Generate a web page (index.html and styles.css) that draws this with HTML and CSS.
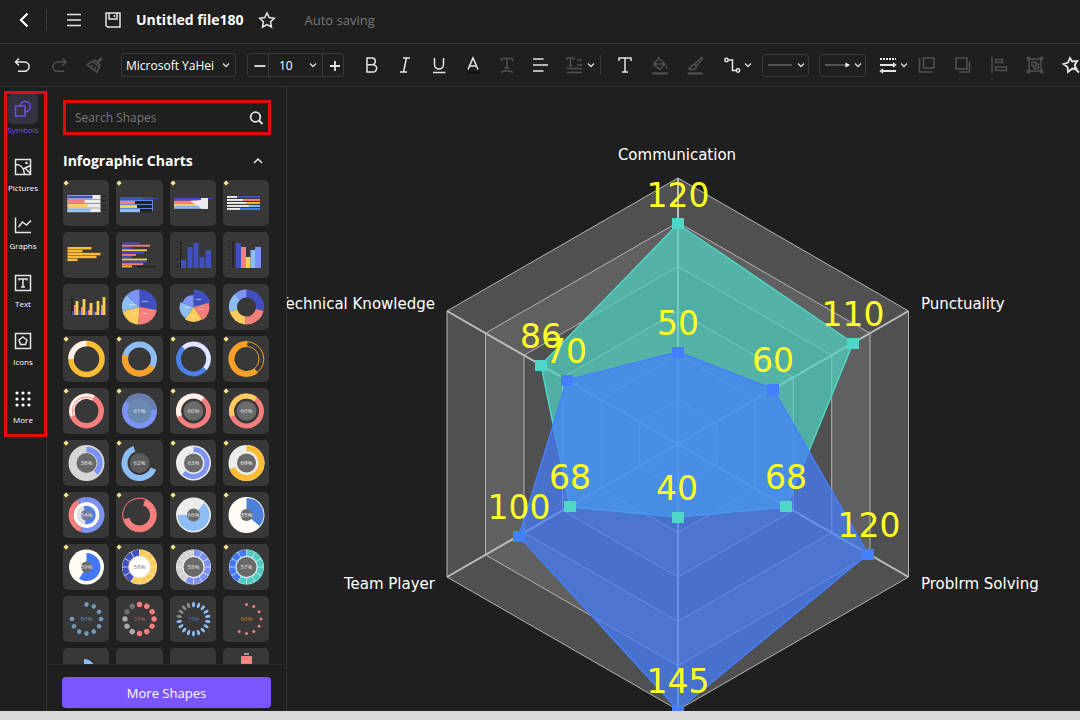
FILE: index.html
```html
<!DOCTYPE html>
<html lang="en">
<head>
<meta charset="utf-8">
<title>Untitled file180</title>
<link rel="stylesheet" href="styles.css">
</head>
<body>
<header class="topbar">
  <button class="icon-btn" aria-label="Back"><svg class="icon bold" viewBox="0 0 24 24"><path d="M15.500 5.500 9 12l6.500 6.500"/></svg></button>
  <span class="divider"></span>
  <button class="icon-btn menu" aria-label="Menu"><svg class="icon" viewBox="0 0 24 24"><path d="M5 6.500h14M5 12h14M5 17.500h14"/></svg></button>
  <button class="icon-btn save" aria-label="Save"><svg class="icon" viewBox="0 0 24 24"><path d="M5 5h14v14H6.500L5 17.500zM8 5v6h8V5M13.500 7v2"/></svg></button>
  <h1 class="title">Untitled file180</h1>
  <button class="icon-btn star" aria-label="Favorite"><svg class="icon" viewBox="0 0 24 24"><path d="m12 5 2.200 4.600 5 .700-3.600 3.500.900 5.200-4.500-2.500L7.500 19l.900-5.200-3.600-3.500 5-.700z"/></svg></button>
  <span class="status">Auto saving</span>
</header>

<div class="toolbar" role="toolbar" aria-label="Formatting">
  <div class="group history">
    <button class="icon-btn" aria-label="Undo"><svg class="icon" viewBox="0 0 24 24"><path d="M8 5.500 4.500 9 8 12.500M5 9h8.500a4.600 4.600 0 0 1 0 9.200H7"/></svg></button>
    <button class="icon-btn off" aria-label="Redo"><svg class="icon" viewBox="0 0 24 24"><path d="M15.500 5.500 19 9l-3.500 3.500M18.500 9H10.500a4.600 4.600 0 0 0 0 9.200H17"/></svg></button>
    <button class="icon-btn off" aria-label="Format painter"><svg class="icon" viewBox="0 0 24 24"><path d="m18.500 4.500-4 4M12 7l5 5-3 7.500L4 11.500zM10 8.500l6 5.500M8 14l2-2M11 16.500l2-2.500M16 9l3-3"/></svg></button>
  </div>
  <span class="select font">
    <select aria-label="Font family"><option>Microsoft YaHei</option></select>
    <svg class="chev" viewBox="0 0 8 8"><path d="m1 2.500 3 3 3-3"/></svg>
  </span>
  <div class="stepper">
    <button aria-label="Smaller"><svg class="icon plus" viewBox="0 0 24 24"><path d="M6.500 12h11"/></svg></button>
    <span class="select size">
      <select aria-label="Font size"><option>10</option></select>
      <svg class="chev" viewBox="0 0 8 8"><path d="m1 2.500 3 3 3-3"/></svg>
    </span>
    <button aria-label="Larger"><svg class="icon plus" viewBox="0 0 24 24"><path d="M7 12h10M12 7v10"/></svg></button>
  </div>
  <div class="group text">
    <button class="icon-btn" aria-label="Bold"><svg class="icon" viewBox="0 0 24 24"><path d="M8 5h5a3.300 3.300 0 0 1 0 6.700H8zM8 11.700h6a3.600 3.600 0 0 1 0 7.300H8z"/></svg></button>
    <button class="icon-btn" aria-label="Italic"><svg class="icon" viewBox="0 0 24 24"><path d="M10 5h7M7 19h7M13.500 5l-3 14"/></svg></button>
    <button class="icon-btn" aria-label="Underline"><svg class="icon" viewBox="0 0 24 24"><path d="M7.500 5v6.500a4.500 4.500 0 0 0 9 0V5M6 19.500h12.500"/></svg></button>
    <button class="icon-btn" aria-label="Font color"><svg class="icon" viewBox="0 0 24 24"><path d="M7 16.500 12 5l5 11.500M8.500 13h7"/><path class="ink" d="M5.500 19.500h13"/></svg></button>
    <button class="icon-btn off" aria-label="Text on path"><svg class="icon" viewBox="0 0 24 24"><path d="M6.500 8V5.500h11V8M12 5.500V15M9.500 15h5M6 19.500c3-2.500 9-2.500 12 0"/></svg></button>
    <button class="icon-btn" aria-label="Align"><svg class="icon" viewBox="0 0 24 24"><path d="M4 6h10.500M4 12h15M4 18h10.500"/></svg></button>
    <button class="icon-btn wide" aria-label="Line spacing"><svg class="icon off" viewBox="0 0 24 24"><path d="M4 7V5h7v2M7.500 5v8M6 13h3M14 7h5M14 12h5M3.500 15.500H19M3.500 19.500H19"/></svg><svg class="chev" viewBox="0 0 8 8"><path d="m1 2.500 3 3 3-3"/></svg></button>
  </div>
  <span class="divider"></span>
  <div class="group style">
    <button class="icon-btn" aria-label="Text tool"><svg class="icon" viewBox="0 0 24 24"><path d="M6 8V5h12v3M12 5v14M9 19h6"/></svg></button>
    <button class="icon-btn off" aria-label="Fill"><svg class="icon" viewBox="0 0 24 24"><path d="m9.500 4 7.500 7-5.500 5.500L5.500 11l5-5M6.500 11h10M18.500 12.500v3"/><path class="thick" d="M4.500 20.500h15"/></svg></button>
    <button class="icon-btn off" aria-label="Line color"><svg class="icon" viewBox="0 0 24 24"><path d="m18.500 4.500-7 6.500 2 2 6-7zM11.500 11.500c-3-.500-3 2.500-5.500 4.500 3.500 1 7.500.500 7.500-3"/><path class="thick" d="M4.500 20.500h15"/></svg></button>
  </div>
  <div class="group lines">
    <button class="icon-btn wide" aria-label="Connector"><svg class="icon" viewBox="0 0 24 24"><circle cx="6.500" cy="7" r="1.700"/><circle cx="18" cy="17.500" r="1.700"/><path d="M8.200 7H12.500v10.500h3.800"/></svg><svg class="chev" viewBox="0 0 8 8"><path d="m1 2.500 3 3 3-3"/></svg></button>
    <button class="line-btn" aria-label="Line type"><svg class="line" viewBox="0 0 26 8"><path d="M1 4h24"/></svg><svg class="chev" viewBox="0 0 8 8"><path d="m1 2.500 3 3 3-3"/></svg></button>
    <button class="line-btn" aria-label="Arrow type"><svg class="line" viewBox="0 0 26 8"><path d="M1 4h22"/><path class="tip" d="m21.500 1.500 4.500 2.500-4.500 2.500z"/></svg><svg class="chev" viewBox="0 0 8 8"><path d="m1 2.500 3 3 3-3"/></svg></button>
    <button class="icon-btn wide" aria-label="Line style"><svg class="icon" viewBox="0 0 24 24"><path class="thick" stroke-dasharray="2 1" d="M4 6h16"/><path class="thick" d="M4 12h14M6 18h14"/><path d="m17 10 2.500 2-2.500 2M7 16l-2.500 2L7 20"/></svg><svg class="chev" viewBox="0 0 8 8"><path d="m1 2.500 3 3 3-3"/></svg></button>
  </div>
  <div class="group arrange">
    <button class="icon-btn off" aria-label="Bring to front"><svg class="icon" viewBox="0 0 24 24"><path d="M8.500 5h10.500v10H8.500zM4.500 5v14h13"/></svg></button>
    <button class="icon-btn off" aria-label="Send to back"><svg class="icon" viewBox="0 0 24 24"><path d="M5 5h11v11H5zM18.500 8.500v10.500H8"/></svg></button>
    <button class="icon-btn off" aria-label="Align objects"><svg class="icon" viewBox="0 0 24 24"><path d="M5 4v16M8.500 6.500h7v3h-7zM8.500 14h11v3.500h-11z"/></svg></button>
    <button class="icon-btn off" aria-label="Group"><svg class="icon" viewBox="0 0 24 24"><path d="M6 6h12v12H6zM9 9h4v4H9zM13 11h2.500v4.500H11V13"/><path d="M4.500 4.500h2v2h-2zM17.500 4.500h2v2h-2zM4.500 17.500h2v2h-2zM17.500 17.500h2v2h-2z"/></svg></button>
    <button class="icon-btn" aria-label="Effects"><svg class="icon strong" viewBox="0 0 24 24"><path d="m11 5 2.200 3.500 5-.500-2.500 4 2 4.500-4.500-1L9 19l-.500-5L4.500 11l4.500-1.500zM15 14.500l5 5"/></svg></button>
  </div>
</div>

<main class="workspace">
  <div class="rail">
    <nav class="rail-nav" aria-label="Libraries">
      <a class="rail-item active" href="#symbols"><span class="rail-icon"><svg class="icon" viewBox="0 0 24 24"><path d="M4.500 9h9.500v10H4.500z"/><path d="M9 9a5.200 5.200 0 1 1 5 5.800"/></svg></span>Symbols</a>
      <a class="rail-item" href="#pictures"><span class="rail-icon"><svg class="icon" viewBox="0 0 24 24"><path d="M4.500 4.500h15v15h-15zM5 9.500c5 0 8 4 8.500 9.500M12 14l7.500-3.500M14 13l5 5"/><circle cx="15.500" cy="8" r=".6"/></svg></span>Pictures</a>
      <a class="rail-item" href="#graphs"><span class="rail-icon"><svg class="icon" viewBox="0 0 24 24"><path d="M4.500 4.500v15H20M7.500 14l4-5 4 3L20 7.500"/></svg></span>Graphs</a>
      <a class="rail-item" href="#text"><span class="rail-icon"><svg class="icon" viewBox="0 0 24 24"><path d="M4.500 4.500h15v15h-15zM8 9.500V8h8v1.500M12 8v8M10 16h4"/></svg></span>Text</a>
      <a class="rail-item" href="#icons"><span class="rail-icon"><svg class="icon" viewBox="0 0 24 24"><path d="M4.500 4.500h15v15h-15zM12 8l4 3-1.500 4.500h-5L8 11z"/></svg></span>Icons</a>
      <a class="rail-item" href="#more"><span class="rail-icon"><svg class="icon dots" viewBox="0 0 24 24"><circle cx="6" cy="6" r="1.600"/><circle cx="12" cy="6" r="1.600"/><circle cx="18" cy="6" r="1.600"/><circle cx="6" cy="12" r="1.600"/><circle cx="12" cy="12" r="1.600"/><circle cx="18" cy="12" r="1.600"/><circle cx="6" cy="18" r="1.600"/><circle cx="12" cy="18" r="1.600"/><circle cx="18" cy="18" r="1.600"/></svg></span>More</a>
    </nav>
  </div>

  <aside class="panel">
    <div class="library">
      <label class="search">
        <input type="text" placeholder="Search Shapes" aria-label="Search Shapes">
        <svg class="icon strong" viewBox="0 0 24 24"><circle cx="11.500" cy="11" r="4.800"/><path d="m15 14.500 3.500 3.500"/></svg>
      </label>
      <div class="section-head">
        <h2>Infographic Charts</h2>
        <button class="icon-btn" aria-label="Collapse"><svg class="icon" viewBox="0 0 24 24"><path d="m8 14 4-4 4 4"/></svg></button>
      </div>
      <div class="tiles" id="tiles"></div>
    </div>
    <div class="panel-foot"><button class="more">More Shapes</button></div>
  </aside>

  <section class="canvas">
    <svg class="radar" viewBox="287 87 793 624" role="img" aria-label="Skills radar chart">
      <g class="rings">
        <path class="dark" d="M678 178 908.500 311V577L678 710 447 577V311z"/>
        <path class="light" d="M678 222.300 870 333.200V554.800L678 665.700 485.500 554.800V333.200z"/>
        <path class="dark" d="M678 266.700 831.700 355.300V532.700L678 621.300 524 532.700V355.300z"/>
        <path class="light" d="M678 311 793.300 377.500V510.500L678 577 562.500 510.500V377.500z"/>
        <path class="dark" d="M678 355.300 754.800 399.700V488.300L678 532.700 601 488.300V399.700z"/>
        <path class="light" d="M678 399.700 716.400 421.800V466.200L678 488.300 639.500 466.200V421.800z"/>
      </g>
      <path class="axes" d="M678 178V710M447 311 908.500 577M908.500 311 447 577"/>
      <path class="area teal" d="M678 224 853 343 786 507 678 517 570 507 541 365z"/>
      <path class="area blue" d="M678 352 773 389 868 554 678 710 519 536 567 380z"/>
      <path class="mark teal" d="M672 218h12v11h-12zM847 338h12v11h-12zM780 501h12v11h-12zM672 512h12v11h-12zM564 501h12v11h-12zM535 360h12v11h-12z"/>
      <path class="mark blue" d="M672 347h12v11h-12zM767 384h12v11h-12zM862 549h12v11h-12zM672 705h12v11h-12zM513 531h12v11h-12zM561 375h12v11h-12z"/>
      <g class="values">
        <text x="678" y="207">120</text><text x="853" y="326">110</text>
        <text x="786" y="489">68</text><text x="677" y="500">40</text>
        <text x="570" y="489">68</text><text x="541" y="348">86</text>
        <text x="678" y="335">50</text><text x="773" y="372">60</text>
        <text x="869" y="537">120</text><text x="678" y="693">145</text>
        <text x="519" y="519">100</text><text x="566" y="363">70</text>
      </g>
      <g class="labels">
        <text class="mid" x="677" y="160">Communication</text>
        <text x="921" y="309">Punctuality</text>
        <text x="921" y="589">Problrm Solving</text>
        <text class="end" x="435" y="589">Team Player</text>
        <text class="end" x="435" y="309">Technical Knowledge</text>
      </g>
    </svg>
  </section>
</main>
<footer class="statusbar"></footer>
<script src="app.js"></script>
</body>
</html>
```
FILE: styles.css
```css
* { box-sizing: border-box; }

body {
  margin: 0;
  height: 100vh;
  display: flex;
  flex-direction: column;
  overflow: hidden;
  background: #1f1f1f;
  color: #fff;
  font-family: "Open Sans", "Noto Sans", sans-serif;
  font-size: 13px;
}

button, select, input {
  margin: 0;
  padding: 0;
  border: 0;
  background: none;
  color: inherit;
  font: inherit;
}

h1, h2 { margin: 0; font-weight: 700; white-space: nowrap; }

.icon {
  width: 24px;
  height: 24px;
  flex: none;
  display: block;
  fill: none;
  stroke: #e6e6e6;
  stroke-width: 1.5;
}
.icon.bold { stroke: #fff; stroke-width: 2.2; }
.icon.strong, .icon.plus { stroke-width: 1.8; }
.icon .thick { stroke-width: 2.2; }
.icon .ink { stroke: #111; stroke-width: 2; }
.off .icon, .icon.off { stroke: #505050; }
.icon.dots { fill: #fff; stroke: none; }

.icon-btn { display: flex; align-items: center; flex: none; width: 24px; height: 24px; }
.icon-btn.wide { width: 32px; }
.chev { width: 8px; height: 8px; flex: none; fill: none; stroke: #ddd; stroke-width: 1.3; }
.divider { width: 1px; height: 22px; flex: none; background: #3a3a3a; }

.topbar {
  display: flex;
  align-items: center;
  flex: none;
  height: 44px;
  padding: 0 12px 4px;
  border-bottom: 1px solid #333;
}
.topbar .divider { margin: 0 15px 0 10px; }
.save { margin-left: 15px; }
.title { margin: 0 11px; font-size: 14px; line-height: 20px; }
.status { margin-left: 26px; color: #777; }

.toolbar {
  display: flex;
  align-items: center;
  flex: none;
  height: 43px;
  padding-left: 11px;
  overflow: hidden;
  border-bottom: 1px solid #333;
}
.group { display: flex; align-items: center; flex: none; gap: 11px; }
.history { gap: 12px; margin-right: 14px; }
.text { gap: 10px; margin: 0 5px 0 15px; }
.style { margin: 0 13px 0 12px; }
.lines { gap: 10px; margin-right: 7px; }
.arrange { gap: 12px; }
.toolbar .divider { height: 20px; }

.select { position: relative; display: flex; align-items: center; flex: none; }
.select select { appearance: none; width: 100%; height: 22px; outline: 0; font-size: 12px; }
.select .chev { position: absolute; right: 5px; pointer-events: none; }
.font { width: 115px; margin-right: 11px; border: 1px solid #3a3a3a; border-radius: 3px; }
.font select { padding-left: 4px; }
.stepper { display: flex; flex: none; width: 97px; border: 1px solid #3a3a3a; border-radius: 3px; }
.stepper button { width: 20px; height: 22px; display: grid; place-items: center; }
.size { flex: 1; border: solid #3a3a3a; border-width: 0 1px; }
.size select { padding-left: 10px; }

.line-btn {
  display: flex;
  align-items: center;
  gap: 4px;
  flex: none;
  width: 47px;
  height: 23px;
  padding-left: 4px;
  border: 1px solid #3a3a3a;
  border-radius: 4px;
}
.line { width: 26px; height: 8px; fill: none; stroke: #888; }
.line .tip { fill: #fff; stroke: none; }

.workspace { display: flex; flex: 1; min-height: 0; }

.rail { flex: none; width: 47px; border-right: 1px solid #303030; padding: 4px 0 0 4px; }
.rail-nav {
  position: relative;
  display: flex;
  flex-direction: column;
  gap: 16px;
  width: 43px;
  padding: 0 5px 8px 0;
  border: 3px solid #e30b0b;
}
.rail-item {
  display: flex;
  flex-direction: column;
  align-items: center;
  color: #fff;
  font-size: 8px;
  line-height: 12px;
  text-decoration: none;
}
.rail-icon { display: grid; place-items: center; width: 30px; height: 30px; border-radius: 5px; }
.active { color: #7050e8; }
.active .rail-icon { background: #35323f; }
.active .icon { stroke: #7050e8; }

.panel { display: flex; flex-direction: column; flex: none; width: 240px; border-right: 1px solid #303030; }
.library { flex: 1; min-height: 0; overflow: hidden; padding: 13px 15px 0 16px; }
.search { display: flex; align-items: center; height: 35px; border: 3px solid #e30b0b; padding: 0 0 0 9px; }
.search input { flex: 1; min-width: 0; outline: 0; font-size: 12px; }
.search input::placeholder { color: #777; opacity: 1; }
.section-head { display: flex; align-items: center; justify-content: space-between; height: 45px; padding: 6px 1px 0 0; }
.section-head h2 { font-size: 14px; line-height: 20px; }
.tiles { display: grid; grid-template-columns: repeat(4, 1fr); gap: 6px 7px; padding-right: 2px; }
.tile { height: 46px; border-radius: 5px; background: #383838; display: grid; place-items: center; }
.tile svg { width: 46px; height: 46px; display: block; }
.tile text { font: 6px "Open Sans", sans-serif; text-anchor: middle; }

.panel-foot { flex: none; padding: 12px 15px 3px; border-top: 1px solid #2a2a2a; }
.more { display: block; width: 100%; height: 31px; border-radius: 4px; background: #7956ff; }

.canvas { flex: 1; min-width: 0; overflow: hidden; }
.radar { display: block; width: 100%; height: 100%; font-family: "DejaVu Sans", sans-serif; }
.rings path { stroke: #b4b4b4; stroke-width: 1; }
.rings .dark { fill: #505050; }
.rings .light { fill: #606060; }
.axes { fill: none; stroke: #bdbdbd; stroke-width: 2; }
.area { fill-opacity: .7; stroke-width: 1.5; }
.teal { fill: #50d6c6; stroke: #50d6c6; }
.blue { fill: #447fff; stroke: #447fff; }
.mark { stroke: none; }
.values { fill: #ffff26; font-size: 33px; text-anchor: middle; }
.labels { fill: #fff; font-size: 15px; }
.mid { text-anchor: middle; }
.end { text-anchor: end; }

.statusbar { flex: none; height: 9px; background: #d9d9d9; }
```
FILE: app.js
```javascript
const C = {
  navy: '#4050c0', peri: '#7c93f5', sky: '#8dbdf5', blue: '#4c7fe8', royal: '#4278f5',
  pink: '#f57f7c', yellow: '#f9cc5c', gold: '#fbbd35', orange: '#f8a027',
  white: '#ececec', snow: '#fffdf5', cream: '#fff0ea', grey: '#6a6a6a', dark: '#222', mint: '#50cbbd'
};
const X = 23.5, Y = 23;

const at = (r, deg) => {
  const a = (deg - 90) * Math.PI / 180;
  return (X + r * Math.cos(a)).toFixed(2) + ' ' + (Y + r * Math.sin(a)).toFixed(2);
};
const rect = (x, y, w, h, c) => `<rect x="${x}" y="${y}" width="${w}" height="${h}" fill="${c}"/>`;
const disc = (r, c) => `<circle cx="${X}" cy="${Y}" r="${r}" fill="${c}"/>`;
const ring = (r, w, c) => `<circle cx="${X}" cy="${Y}" r="${r}" fill="none" stroke="${c}" stroke-width="${w}"/>`;
const arc = (r, w, c, a, b) =>
  `<path fill="none" stroke="${c}" stroke-width="${w}" d="M${at(r, a)}A${r} ${r} 0 ${b - a > 180 ? 1 : 0} 1 ${at(r, b)}"/>`;
const wedge = (r, c, a, b) =>
  `<path fill="${c}" d="M${X} ${Y}L${at(r, a)}A${r} ${r} 0 ${b - a > 180 ? 1 : 0} 1 ${at(r, b)}z"/>`;
const label = (t, c = '#e8e8e8') => `<text x="${X}" y="25" fill="${c}">${t}</text>`;
const star = '<path fill="#f5e68a" d="M3 .500 5.700 3 3 5.700.500 3z"/>';

const segments = (n, split, a, b) => {
  let s = '';
  for (let i = 0; i < n; i++) s += arc(14.2, 6, i < split ? a : b, i * 360 / n + 1.5, (i + 1) * 360 / n - 1.5);
  return s;
};
const beads = (n, from, count, rx, ry, color) => {
  let s = '';
  for (let i = from; i < from + count; i++) {
    s += `<ellipse cx="${X}" cy="${Y - 14.5}" rx="${rx}" ry="${ry}" fill="${color(i)}" transform="rotate(${i * 360 / n} ${X} ${Y})"/>`;
  }
  return s;
};
const stack = (bg, rows, x, y, step, h) =>
  rows.map((r, i) => {
    let px = x, s = bg ? rect(x, y + i * step - .5, 33, h + 1, bg) : '';
    r.forEach(([w, c]) => { s += rect(px, y + i * step, w, h, c); px += w; });
    return s;
  }).join('');

const tiles = [
  star + stack(C.white, [[[25, C.navy]], [[17, C.pink]], [[20, C.yellow]], [[23, C.sky]]], 4.5, 15.5, 4.4, 3)
    + rect(38, 16, 5, 1, C.dark) + rect(38, 20, 5, 1, C.dark) + rect(38, 25, 5, 1, C.dark) + rect(38, 29, 5, 1, C.dark),
  star + stack('', [[[23, C.navy], [10, '#3b479c']], [[15, C.pink], [17, C.dark]], [[17, C.yellow], [15, C.dark]], [[20, C.sky], [12, C.dark]]], 4, 17, 4, 3.2)
    + '<path d="M4 20.500h33M4 24.500h33M4 28.500h33M36.500 20v11" fill="none" stroke="#6585db"/>' + rect(37, 18, 5, 1, C.navy),
  star + stack('', [[[28, C.navy]], [[22, C.pink]], [[24, C.yellow]], [[29, C.sky]]], 4, 18, 2.7, 2.7)
    + '<path fill="#ececec" d="M31 18h7v11h-6l-4-3-8-5 11-1z"/>' + rect(38, 18, 5, 1, C.navy),
  star + stack('', [[[10, C.white], [23, C.navy]], [[16, C.white], [17, C.pink]], [[19, C.white], [14, C.gold]], [[22, C.white], [11, C.sky]], [[13, C.white], [20, C.blue]]], 4, 16, 3, 1.9),

  stack('', [[[24, C.gold]], [[15, C.gold]], [[33, C.gold]], [[29, C.gold]], [[10, C.gold]]], 4.5, 15, 2.9, 2.5),
  stack('', [[[18, C.navy]], [[28, C.pink]], [[10, C.navy]], [[25, C.yellow]], [[22, C.navy]], [[14, C.pink]], [[10, C.navy]], [[25, C.yellow]], [[24, C.navy]], [[21, C.pink]], [[10, C.gold]]], 6, 10.5, 2.3, 1.8) + rect(22, 34, 18, 1.5, C.dark),
  rect(10, 9, 1.5, 27, C.dark) + rect(6, 9, 2, 1, C.dark) + rect(6, 15, 2, 1, C.dark) + rect(6, 21, 2, 1, C.dark) + rect(6, 27, 2, 1, C.dark) + rect(6, 34, 2, 1, C.dark)
    + rect(11, 28, 5, 8, C.navy) + rect(17.5, 15, 5, 21, C.navy) + rect(23.5, 11, 5, 25, C.navy) + rect(29.5, 25, 5, 11, C.navy) + rect(35.5, 18, 5.5, 18, C.navy),
  rect(9, 9, 1.5, 27, C.dark) + rect(5, 9, 2, 1, C.dark) + rect(5, 15, 2, 1, C.dark) + rect(5, 21, 2, 1, C.dark) + rect(5, 27, 2, 1, C.dark) + rect(5, 34, 2, 1, C.dark)
    + rect(13, 11, 5, 25, C.navy) + rect(18, 15, 5, 21, C.pink) + rect(23, 25, 4.5, 11, C.yellow) + rect(27.5, 18, 4.5, 18, C.sky) + rect(32, 15, 6, 21, C.peri),

  rect(8, 14, 2, 17, C.dark) + rect(5, 15, 2, 1, C.dark) + rect(5, 22, 2, 1, C.dark)
    + [[11, 21, 17], [18, 23, 15], [25, 26, 19], [32, 28, 17], [38, 21, 13]].map(([x, a, b]) =>
      rect(x - 2, 27, 2, 4, C.navy) + rect(x, a, 2, 31 - a, C.pink) + rect(x + 1.6, b, 2.8, 31 - b, C.yellow)).join(''),
  wedge(17.5, C.navy, 0, 100) + wedge(17.5, C.pink, 100, 184) + wedge(17.5, C.yellow, 184, 256) + wedge(17.5, C.sky, 256, 313) + wedge(17.5, C.peri, 313, 360)
    + rect(26, 17, 6, 1, '#a9b1e8') + rect(13, 20, 6, 1, '#c5dcfa') + rect(16, 29, 5, 1, '#fbe4ac') + rect(26, 29, 5, 1, '#fac0bd'),
  wedge(17.5, C.navy, 0, 75) + wedge(16, C.pink, 75, 145) + wedge(15, C.yellow, 145, 215) + wedge(14, C.sky, 215, 290) + wedge(12, C.peri, 290, 360)
    + rect(26, 15, 5, 1, '#a9b1e8') + rect(14, 23, 5, 1, '#c5dcfa') + rect(21, 32, 5, 1, '#fbe4ac') + rect(29, 25, 5, 1, '#fac0bd'),
  arc(13.5, 8, C.navy, 0, 102) + arc(13.5, 8, C.pink, 102, 185) + arc(13.5, 8, C.yellow, 185, 255) + arc(13.5, 8, C.sky, 255, 318) + arc(13.5, 8, C.peri, 318, 360),

  star + ring(15.5, 5.5, C.gold) + arc(15.5, 5.5, C.cream, 270, 360),
  star + ring(14.5, 6, C.sky) + arc(14.5, 6, C.orange, 120, 285),
  star + ring(15, 5, C.blue) + arc(15, 4.5, '#e5e5fb', -42, 130),
  star + arc(15, 6, C.orange, 140, 363) + arc(17.3, 1, C.orange, 0, 145) + arc(12.5, 1, C.orange, 0, 145),

  star + ring(14.7, 5.5, C.pink) + arc(14.7, 5.5, C.cream, -110, 28) + arc(14, 1, C.pink, -110, 28),
  star + disc(17.5, C.peri) + wedge(17.5, '#687fad', -55, 85) + disc(12, '#6a88b0') + label('61%'),
  star + ring(15, 5, C.pink) + arc(15, 5, C.cream, -110, 38) + disc(10, C.grey) + label('60%'),
  star + ring(15, 5, C.pink) + arc(15, 5, C.yellow, -110, 38) + disc(10, C.grey) + label('60%'),

  star + disc(18, '#d6d6d6') + arc(13.5, 5.5, C.peri, 0, 137) + disc(10, C.grey) + label('38%'),
  star + arc(15, 6, C.sky, 112, 340) + disc(10, '#5c5c5c') + label('62%'),
  star + disc(17.5, C.white) + arc(13.5, 5, C.peri, 0, 225) + disc(9.5, C.grey) + label('63%'),
  star + disc(18, C.white) + arc(15, 6, C.gold, 0, 250) + disc(9.5, C.grey) + label('69%', '#fff'),

  star + arc(15.5, 5, C.peri, 0, 200) + arc(15.5, 5, C.pink, 200, 330) + arc(15.5, 5, C.peri, 330, 360) + disc(13, '#fff') + disc(10, '#dedee6') + wedge(9, C.blue, -20, 190) + disc(5.5, '#77779a') + label('54%'),
  star + ring(16.8, 1, C.pink) + arc(13.5, 6, C.pink, 20, 255),
  star + disc(17.5, C.white) + wedge(16, C.sky, 42, 270) + disc(6.5, C.grey) + label('66%'),
  star + disc(18, C.snow) + wedge(17, '#4c80d9', 0, 130) + disc(6, C.grey) + label('35%', '#fff'),

  star + disc(17.5, C.snow) + wedge(14, C.royal, 0, 212) + disc(5.5, C.grey) + label('59%'),
  star + disc(17.5, '#f3e9d4') + segments(12, 7, C.yellow, C.navy) + disc(10, '#fff') + label('58%', '#777'),
  star + disc(17.5, '#eee') + segments(12, 7, C.peri, '#d2d2d2') + disc(10, C.grey) + label('58%'),
  star + disc(17.5, '#d8edf5') + segments(12, 7, C.mint, C.royal) + disc(10, C.grey) + label('57%'),

  beads(12, 0, 10, 2.2, 2.4, () => '#7199bd') + label('80%', '#6f91b8'),
  beads(12, 0, 12, 2.7, 2.7, i => i < 7 ? C.pink : i < 10 ? '#aaa' : '#707070') + label('59%', '#b85d5d'),
  beads(18, 0, 18, 1.5, 2.8, i => i < 14 ? '#8dbdf5' : '#8a8a8a') + label('73%', '#4c6fb8'),
  beads(12, 0, 8, 1.5, 1.5, () => C.pink) + label('60%', '#c78628'),

  '<path fill="#8dbdf5" d="M21 11c5 0 9 3 11 8H21z"/>',
  rect(19, 16, 1, 3, '#666'),
  '',
  rect(21, 5, 5, 2, '#999') + rect(18, 8, 11, 14, C.pink) + rect(20, 13, 6, 1, '#fbb')
];

document.getElementById('tiles').innerHTML =
  tiles.map(t => `<div class="tile"><svg viewBox="0 0 46 46">${t}</svg></div>`).join('');
```
